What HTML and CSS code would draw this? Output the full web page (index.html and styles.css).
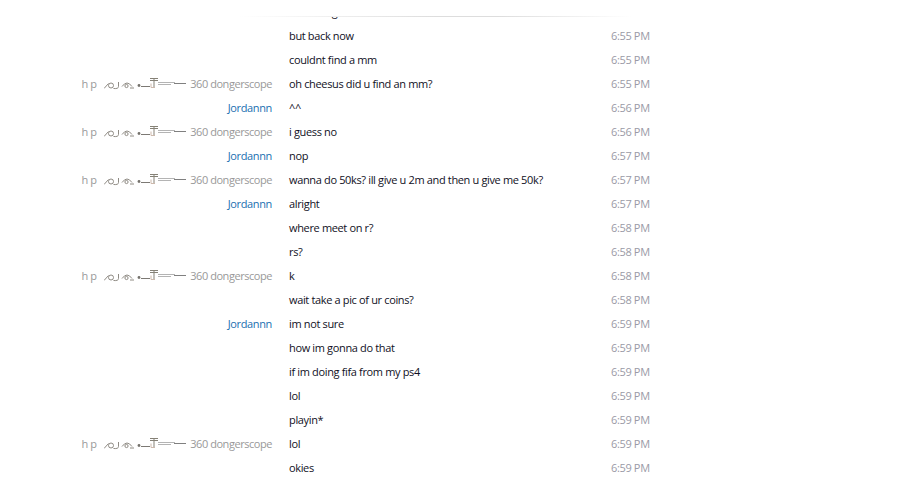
FILE: index.html
```html
<!DOCTYPE html>
<html lang="en">
<head>
  <meta charset="UTF-8" />
  <title>Chat log</title>
  <link rel="stylesheet" href="styles.css">
</head>
<body>
  <div class="fade-line"></div>
  <div class="log">
    <div class="rows">
      <div class="row"><span class="name"></span><span class="text">was doing ,</span><span class="time">6:55 PM</span></div>
      <div class="row"><span class="name"></span><span class="text">but back now</span><span class="time">6:55 PM</span></div>
      <div class="row"><span class="name"></span><span class="text">couldnt find a mm</span><span class="time">6:55 PM</span></div>
      <div class="row"><span class="name hp">h p <svg class="flourish" width="83" height="14" viewBox="0 0 83 14"><use href="#flourish"/></svg> 360 dongerscope</span><span class="text">oh cheesus did u find an mm?</span><span class="time">6:55 PM</span></div>
      <div class="row"><span class="name jord">Jordannn</span><span class="text">^^</span><span class="time">6:56 PM</span></div>
      <div class="row"><span class="name hp">h p <svg class="flourish" width="83" height="14" viewBox="0 0 83 14"><use href="#flourish"/></svg> 360 dongerscope</span><span class="text">i guess no</span><span class="time">6:56 PM</span></div>
      <div class="row"><span class="name jord">Jordannn</span><span class="text">nop</span><span class="time">6:57 PM</span></div>
      <div class="row"><span class="name hp">h p <svg class="flourish" width="83" height="14" viewBox="0 0 83 14"><use href="#flourish"/></svg> 360 dongerscope</span><span class="text">wanna do 50ks? ill give u 2m and then u give me 50k?</span><span class="time">6:57 PM</span></div>
      <div class="row"><span class="name jord">Jordannn</span><span class="text">alright</span><span class="time">6:57 PM</span></div>
      <div class="row"><span class="name"></span><span class="text">where meet on r?</span><span class="time">6:58 PM</span></div>
      <div class="row"><span class="name"></span><span class="text">rs?</span><span class="time">6:58 PM</span></div>
      <div class="row"><span class="name hp">h p <svg class="flourish" width="83" height="14" viewBox="0 0 83 14"><use href="#flourish"/></svg> 360 dongerscope</span><span class="text">k</span><span class="time">6:58 PM</span></div>
      <div class="row"><span class="name"></span><span class="text">wait take a pic of ur coins?</span><span class="time">6:58 PM</span></div>
      <div class="row"><span class="name jord">Jordannn</span><span class="text">im not sure</span><span class="time">6:59 PM</span></div>
      <div class="row"><span class="name"></span><span class="text">how im gonna do that</span><span class="time">6:59 PM</span></div>
      <div class="row"><span class="name"></span><span class="text">if im doing fifa from my ps4</span><span class="time">6:59 PM</span></div>
      <div class="row"><span class="name"></span><span class="text">lol</span><span class="time">6:59 PM</span></div>
      <div class="row"><span class="name"></span><span class="text">playin*</span><span class="time">6:59 PM</span></div>
      <div class="row"><span class="name hp">h p <svg class="flourish" width="83" height="14" viewBox="0 0 83 14"><use href="#flourish"/></svg> 360 dongerscope</span><span class="text">lol</span><span class="time">6:59 PM</span></div>
      <div class="row"><span class="name"></span><span class="text">okies</span><span class="time">6:59 PM</span></div>
    </div>
  </div>

  <!-- decorative name glyphs, reused on every row -->
  <svg class="defs" width="0" height="0">
    <symbol id="flourish" viewBox="0 0 83 14">
      <g fill="none" stroke="#8f8b84" stroke-width="1">
        <path d="M0 11.5 L4.5 6.5"/>
        <circle cx="7" cy="8.5" r="2.5"/>
        <path d="M14.5 5 v4.5 q0 2.5 -5 2"/>
        <path d="M18 9.5 q5 -7 10 0 M26 11 h4"/>
        <circle cx="22.5" cy="9" r="1.6"/>
      </g>
      <circle cx="35" cy="8.5" r="1.4" fill="#75726c"/>
      <g fill="none" stroke-width="1">
        <path d="M37 9.5 h9" stroke="#7c7974"/>
        <path d="M46 1.5 h8 M46 3.5 h8 M50 1 v9" stroke="#858176"/>
        <path d="M47 6.5 v4 h4" stroke="#cdb9ac"/>
        <path d="M54 5.5 h17 M54 7.5 h13" stroke="#b4b4b4"/>
        <path d="M70 6.5 h12" stroke="#808080"/>
      </g>
    </symbol>
  </svg>
</body>
</html>
```

FILE: styles.css
```css
* {
  margin: 0;
  padding: 0;
  box-sizing: border-box;
}

html, body {
  height: 100%;
  background-color: #fff;
  overflow: hidden;
  font-family: 'Open Sans', 'Noto Sans', sans-serif;
  font-size: 11px;
  letter-spacing: -0.35px;
}

/* line under the top bar, fades out to the right */
.fade-line {
  position: absolute;
  top: 16px;
  left: 240px;
  width: 392px;
  height: 1px;
  background: linear-gradient(to right, #fff 0%, #ddd 50%, #ddd 66%, #fff 100%);
}

.log {
  margin-top: 16px;
  height: 467px;
  overflow: hidden;
}

.rows {
  margin-top: -16px;
}

.row {
  display: flex;
  align-items: center;
  height: 24px;
  line-height: 24px;
}

.name {
  width: 272px;
  text-align: right;
  white-space: nowrap;
}

.hp {
  color: #999;
  letter-spacing: -0.45px;
}

.jord {
  color: #1a6fb0;
}

.flourish {
  vertical-align: -3px;
  margin: 0 1px 0 5px;
}

.text {
  width: 322px;
  margin-left: 17px;
  color: #101024;
  white-space: nowrap;
}

.time {
  color: #9a9aa6;
}

.defs {
  position: absolute;
}
```
